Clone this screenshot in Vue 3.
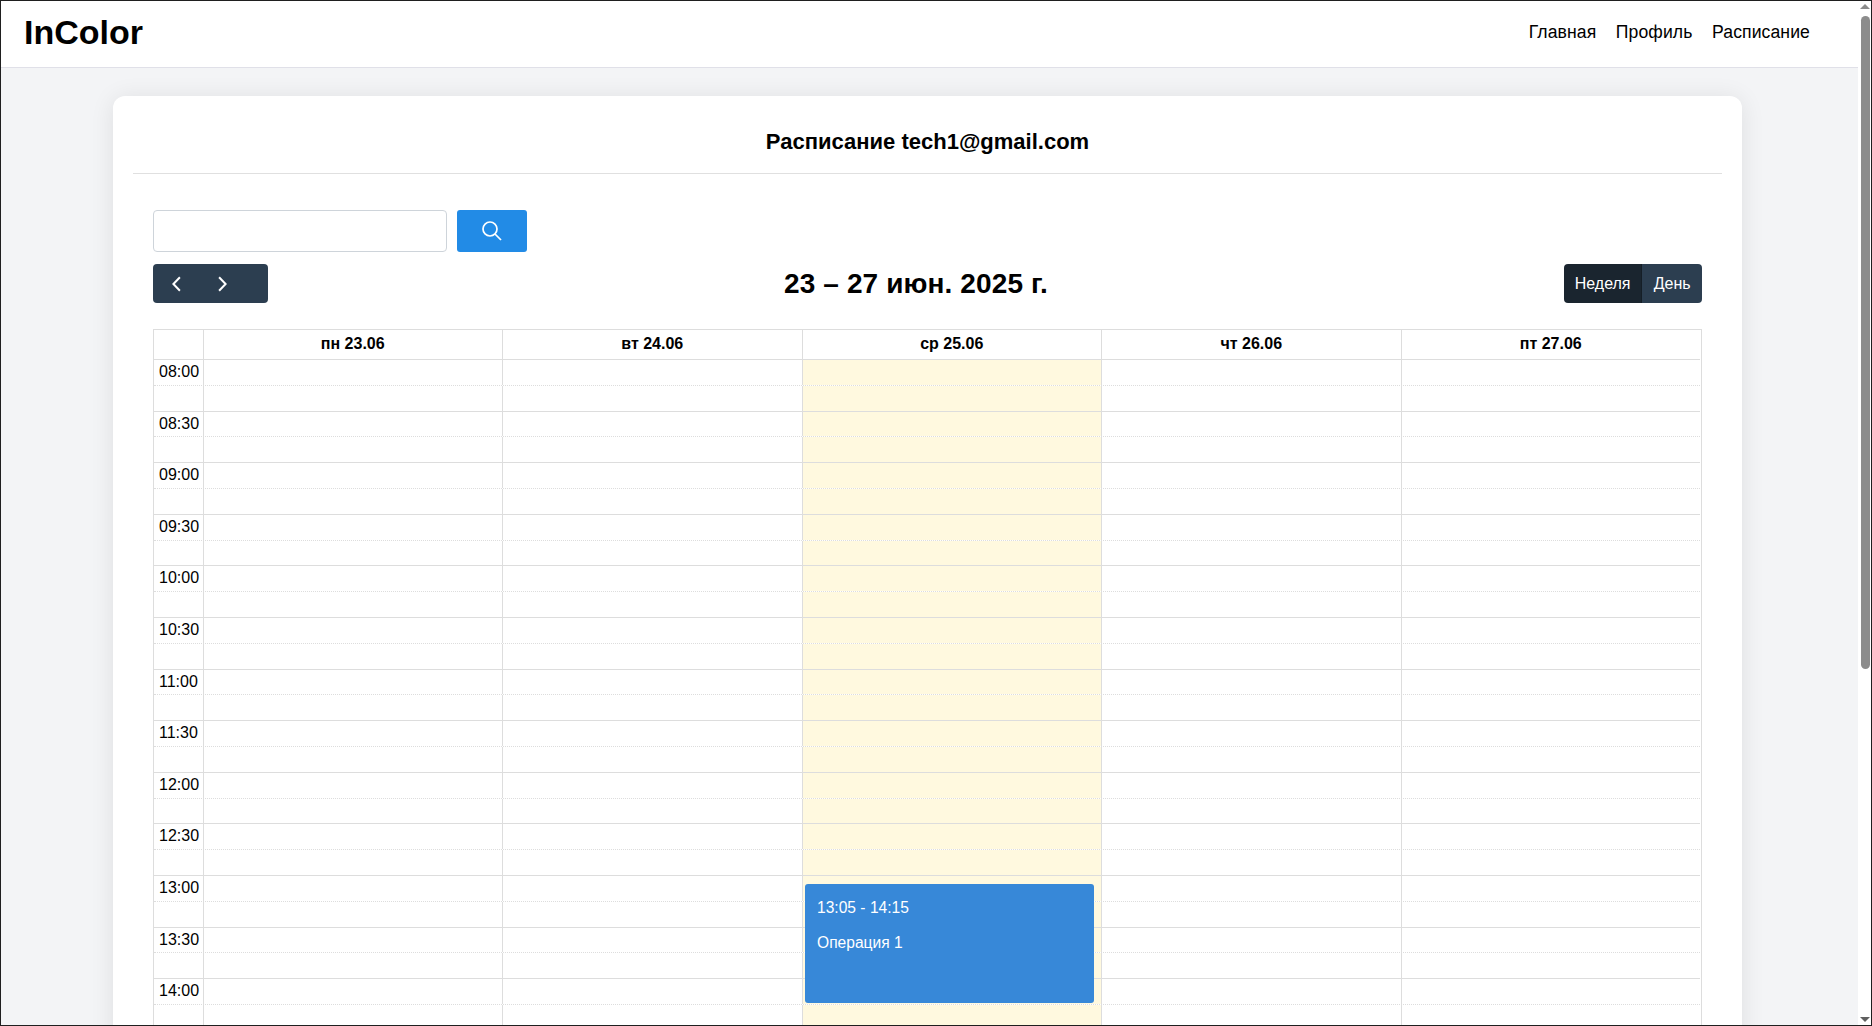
<script setup>
const days = [
  { label: 'пн 23.06' },
  { label: 'вт 24.06' },
  { label: 'ср 25.06', today: true },
  { label: 'чт 26.06' },
  { label: 'пт 27.06' },
]
const times = ['08:00','08:30','09:00','09:30','10:00','10:30','11:00','11:30','12:00','12:30','13:00','13:30','14:00']
</script>

<template>
  <div class="frame">
    <div class="page">
      <header class="navbar">
        <div class="brand">InColor</div>
        <nav class="links">
          <a>Главная</a>
          <a>Профиль</a>
          <a>Расписание</a>
        </nav>
      </header>
      <main class="card">
        <h2 class="card-title">Расписание tech1@gmail.com</h2>
        <div class="card-body">
          <div class="search">
            <input class="search-input" type="text" />
            <button class="search-btn" aria-label="Поиск">
              <svg width="20" height="20" viewBox="0 0 20 20" fill="none" stroke="#fff" stroke-width="1.7">
                <circle cx="8" cy="8" r="7" />
                <path d="M13 13l6 6" />
              </svg>
            </button>
          </div>
          <div class="toolbar">
            <div class="nav-group">
              <button class="nav-btn" aria-label="Назад">
                <svg width="10" height="16" viewBox="0 0 10 16" fill="none" stroke="#fff" stroke-width="2"><path d="M8.9 1.2L2.4 8l6.5 6.8" /></svg>
              </button>
              <button class="nav-btn" aria-label="Вперёд">
                <svg width="10" height="16" viewBox="0 0 10 16" fill="none" stroke="#fff" stroke-width="2"><path d="M2.1 1.2L8.6 8 2.1 14.8" /></svg>
              </button>
            </div>
            <h2 class="range">23 – 27 июн. 2025 г.</h2>
            <div class="view-group">
              <button class="view-btn active">Неделя</button>
              <button class="view-btn">День</button>
            </div>
          </div>
          <div class="calendar">
            <div class="row head">
              <div class="time-cell"></div>
              <div v-for="d in days" :key="d.label" class="cell head-cell">{{ d.label }}</div>
            </div>
            <div class="grid-body">
              <div v-for="t in times" :key="t" class="half">
                <div class="row slot">
                  <div class="time-cell time-label">{{ t }}</div>
                  <div v-for="d in days" :key="d.label" class="cell" :class="{ today: d.today }"></div>
                </div>
                <div class="row slot minor">
                  <div class="time-cell"></div>
                  <div v-for="d in days" :key="d.label" class="cell" :class="{ today: d.today }"></div>
                </div>
              </div>
              <div class="event">
                <div class="event-time">13:05 - 14:15</div>
                <div class="event-title">Операция 1</div>
              </div>
            </div>
          </div>
        </div>
      </main>
    </div>
    <div class="scrollbar">
      <span class="arrow up"></span>
      <span class="thumb"></span>
      <span class="arrow down"></span>
    </div>
  </div>
</template>

<style>
html, body { margin: 0; overflow: hidden; }
</style>

<style scoped>
.frame {
  box-sizing: border-box;
  width: 1872px;
  height: 1026px;
  border: 1px solid #1f1f1f;
  display: flex;
  font-family: "Liberation Sans", Arial, sans-serif;
  color: #000;
  background: #fff;
  overflow: hidden;
}
.page {
  flex: 1;
  min-width: 0;
  height: 100%;
  background: #f3f4f6;
  overflow: hidden;
}
.navbar {
  box-sizing: border-box;
  height: 67px;
  background: #fff;
  border-bottom: 1px solid #e0e0e8;
  display: flex;
  align-items: center;
  justify-content: space-between;
  padding: 0 48px 4px 23px;
}
.brand { font-size: 34px; font-weight: 700; line-height: 1; }
.links { display: flex; gap: 19.5px; font-size: 17.6px; letter-spacing: 0.1px; }
.card {
  margin: 28px 116px 0 112px;
  background: #fff;
  border-radius: 12px;
  box-shadow: 0 2px 24px rgba(0, 0, 0, 0.09);
  padding: 0 20px;
  height: 1200px;
}
.card-title {
  box-sizing: border-box;
  margin: 0;
  height: 78px;
  line-height: 92px;
  text-align: center;
  font-size: 22px;
  font-weight: 700;
  border-bottom: 1px solid #e0e0e0;
}
.card-body { padding: 36px 20px 0; }
.search { display: flex; gap: 10px; height: 42px; }
.search-input {
  box-sizing: border-box;
  width: 294px;
  height: 42px;
  border: 1px solid #ced4da;
  border-radius: 4px;
  background: #fff;
  margin: 0;
  padding: 0 10px;
}
.search-btn {
  width: 70px;
  height: 42px;
  border: 0;
  border-radius: 3px;
  background: #228be6;
  display: flex;
  align-items: center;
  justify-content: center;
  padding: 0;
}
.toolbar {
  margin-top: 12px;
  height: 39px;
  display: flex;
  align-items: center;
  justify-content: space-between;
}
.nav-group {
  display: flex;
  height: 39px;
  padding-right: 23px;
  background: #2c3e50;
  border-radius: 4px;
}
.nav-btn {
  width: 46px;
  height: 39px;
  border: 0;
  padding: 0;
  background: transparent;
  display: flex;
  align-items: center;
  justify-content: center;
}
.range { margin: 0; font-size: 28px; font-weight: 700; line-height: 39px; letter-spacing: 0.12px; }
.view-group { display: flex; height: 39px; border-radius: 4px; overflow: hidden; }
.view-btn {
  border: 0;
  background: #2c3e50;
  color: #fff;
  font: 16px "Liberation Sans", Arial, sans-serif;
  padding: 0 11.4px;
  height: 39px;
  line-height: 36px;
}
.view-btn.active { background: #1a252f; border-right: 1px solid #151e26; padding: 0 10.8px; }
.calendar {
  margin-top: 26px;
  border: 1px solid #ddd;
  border-bottom: 0;
  padding-right: 1px;
}
.row {
  display: grid;
  grid-template-columns: 48.5px repeat(5, 1fr);
}
.head { height: 30px; box-sizing: border-box; border-bottom: 1px solid #ddd; }
.cell { border-left: 1px solid #ddd; }
.head-cell {
  text-align: center;
  font-size: 16px;
  font-weight: 700;
  line-height: 27px;
}
.today { background: #fff9df; }
.grid-body { position: relative; }
.half { height: 51.6px; display: flex; flex-direction: column; box-sizing: border-box; border-bottom: 1px solid #ddd; }
.slot { flex: 1; min-height: 0; }
.slot:first-child { border-bottom: 1px dotted #ddd; }
.time-label {
  font-size: 16px;
  line-height: 24px;
  padding-left: 5px;
  white-space: nowrap;
}
.event {
  position: absolute;
  left: 651px;
  width: 289px;
  top: 524px;
  height: 119px;
  box-sizing: border-box;
  background: #3788d8;
  border-radius: 3px;
  color: #fff;
  padding: 14px 12px;
  font-size: 15.6px;
}
.event-time { line-height: 20px; }
.event-title { margin-top: 15px; line-height: 20px; }
.scrollbar {
  width: 13px;
  height: 100%;
  position: relative;
  background: #fff;
}
.thumb {
  position: absolute;
  left: 3px;
  top: 15px;
  width: 9px;
  height: 653px;
  border-radius: 5px;
  background: #8c8c8c;
}
.arrow {
  position: absolute;
  left: 2px;
  width: 0;
  height: 0;
  border-left: 5px solid transparent;
  border-right: 5px solid transparent;
}
.arrow.up { top: 3px; border-bottom: 5px solid #8c8c8c; }
.arrow.down { bottom: 3px; border-top: 5px solid #606060; }
</style>
